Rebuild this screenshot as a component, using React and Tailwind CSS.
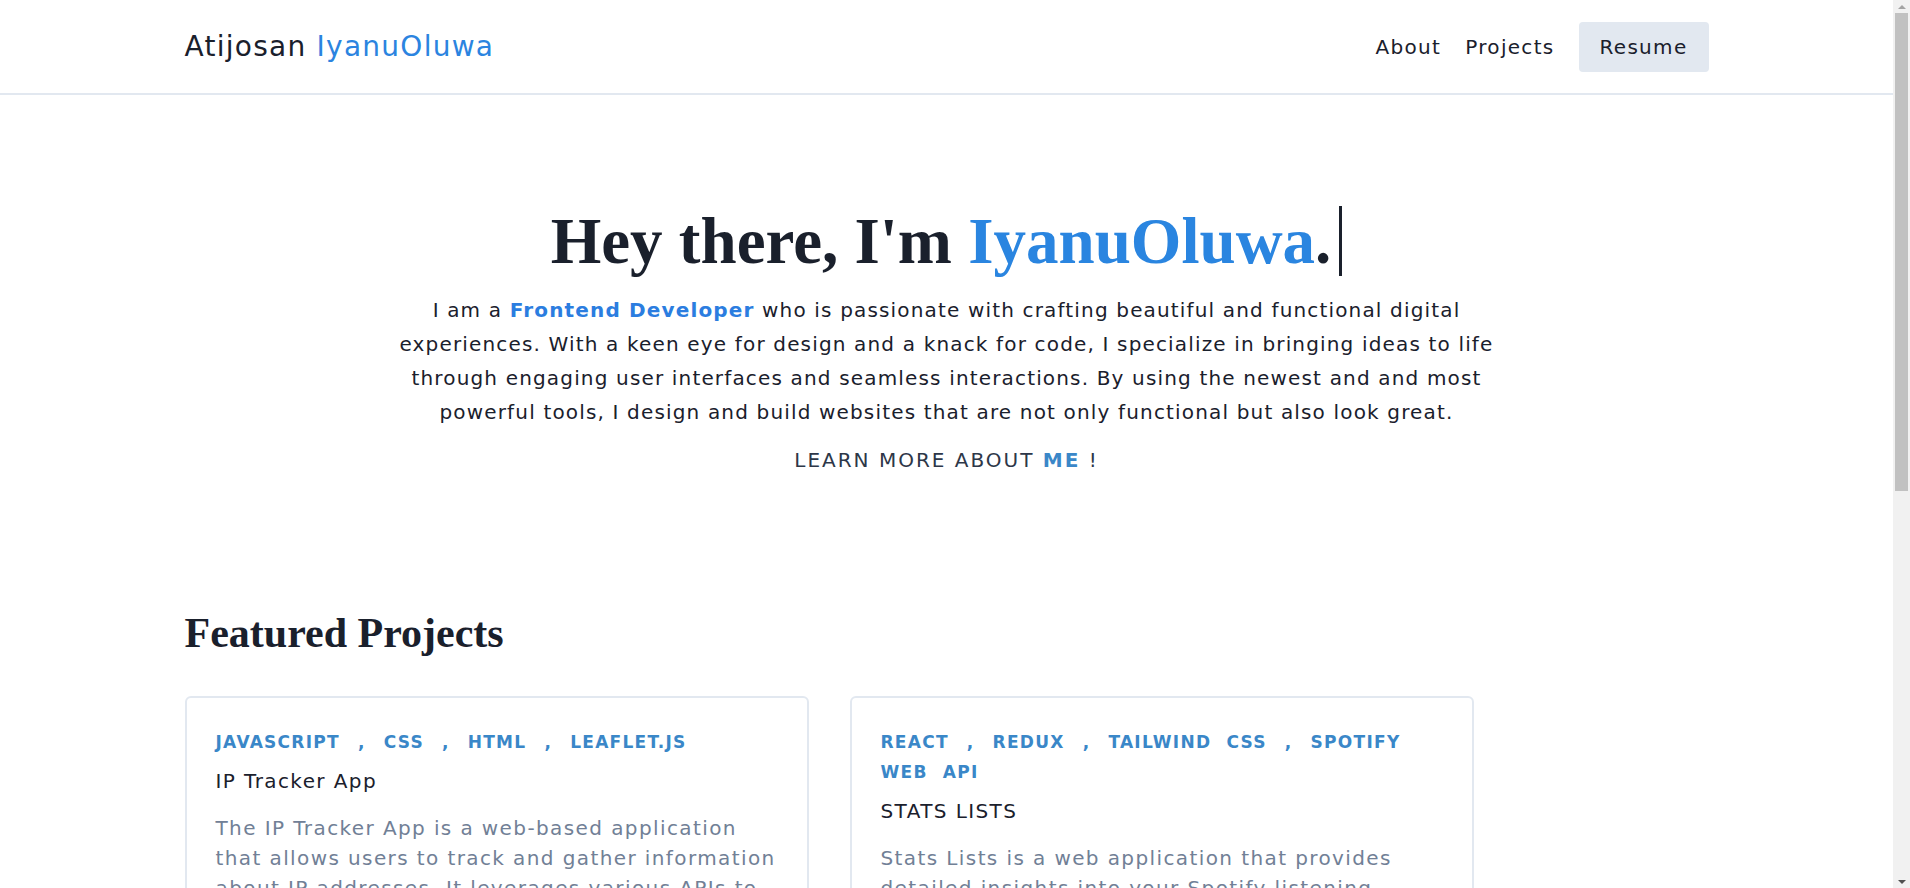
import React from "react";

const projects = [
  {
    tags: ["javascript", "css", "html", "leaflet.js"],
    title: "IP Tracker App",
    description:
      "The IP Tracker App is a web-based application that allows users to track and gather information about IP addresses. It leverages various APIs to fetch location data and displays it on an interactive map.",
  },
  {
    tags: ["react", "redux", "tailwind css", "spotify web api"],
    title: "STATS LISTS",
    description:
      "Stats Lists is a web application that provides detailed insights into your Spotify listening habits, showing your top artists, tracks and recently played songs.",
  },
];

const ProjectCard = ({ project }) => (
  <div className="w-[624px] rounded-md border-2 border-[#e2e8f0] px-[29px] pt-[29px] pb-10">
    <p className="text-[17px] font-bold uppercase leading-[30px] tracking-[0.075em] text-[#3a87c8] [word-spacing:8px]">
      {project.tags.map((tag, i) => (
        <React.Fragment key={tag}>
          {tag}
          {i < project.tags.length - 1 && <span className="mx-[18px]">,</span>}
        </React.Fragment>
      ))}
    </p>
    <h3 className="mt-[9px] text-[20px] tracking-[0.07em] text-[#1a202c]">{project.title}</h3>
    <p className="mt-[17px] text-[20px] leading-[30px] tracking-[0.07em] text-[#718096]">{project.description}</p>
  </div>
);

const FakeScrollbar = () => (
  <div className="flex w-[17px] shrink-0 flex-col bg-[#f1f1f1]">
    <div className="flex h-[13px] items-center justify-center">
      <span className="h-0 w-0 border-x-[4px] border-b-[4px] border-x-transparent border-b-[#a3a3a3]" />
    </div>
    <div className="mx-[2px] h-[478px] bg-[#c1c1c1]" />
    <div className="flex-1" />
    <div className="flex h-[13px] items-center justify-center">
      <span className="h-0 w-0 border-x-[4px] border-t-[4px] border-x-transparent border-t-[#505050]" />
    </div>
  </div>
);

export default function App() {
  return (
    <div className="flex h-screen overflow-hidden bg-white font-['DejaVu_Sans',sans-serif] text-[#1a202c]">
      <main className="min-w-0 flex-1">
        <header className="border-b-2 border-[#e2e8f0]">
          <div className="mx-auto flex h-[93px] w-[1524px] items-center justify-between">
            <a href="#" className="text-[28px] tracking-[0.045em] text-[#1a202c]">
              Atijosan <span className="text-[#2b84e0]">IyanuOluwa</span>
            </a>
            <nav className="flex items-center gap-[24px] text-[20px] tracking-[0.065em]">
              <a href="#about">About</a>
              <a href="#projects">Projects</a>
              <a href="#" className="rounded bg-[#e2e8f0] px-[21px] py-[10px]">
                Resume
              </a>
            </nav>
          </div>
        </header>

        <section className="flex flex-col items-center pt-[107px] text-center">
          <h1 className="flex items-center font-['Liberation_Serif',serif] text-[65px] font-bold leading-[1.2] text-[#1a202c]">
            Hey there, I'm&nbsp;<span className="text-[#2a85e0]">IyanuOluwa</span>.
            <span className="ml-[8px] inline-block h-[70px] w-[3px] bg-[#1a202c]" />
          </h1>
          <p className="mt-[13px] max-w-[1120px] text-[20px] leading-[34px] tracking-[0.058em] text-[#1a202c]">
            I am a <span className="font-bold text-[#2b7de0]">Frontend Developer</span> who is passionate with crafting
            beautiful and functional digital experiences. With a keen eye for design and a knack for code, I specialize
            in bringing ideas to life through engaging user interfaces and seamless interactions. By using the newest and
            and most powerful tools, I design and build websites that are not only functional but also look great.
          </p>
          <a href="#about" className="mt-[16px] text-[20px] uppercase tracking-[0.1em] text-[#2d3748]">
            Learn more about <span className="font-bold text-[#3a87c8]">me</span> !
          </a>
        </section>

        <section id="projects" className="mx-auto mt-[127px] w-[1524px] pb-24">
          <h2 className="font-['Liberation_Serif',serif] text-[42px] font-bold text-[#1a202c]">Featured Projects</h2>
          <div className="mt-[31px] flex items-start gap-[41px]">
            {projects.map((p) => (
              <ProjectCard key={p.title} project={p} />
            ))}
          </div>
        </section>
      </main>
      <FakeScrollbar />
    </div>
  );
}
